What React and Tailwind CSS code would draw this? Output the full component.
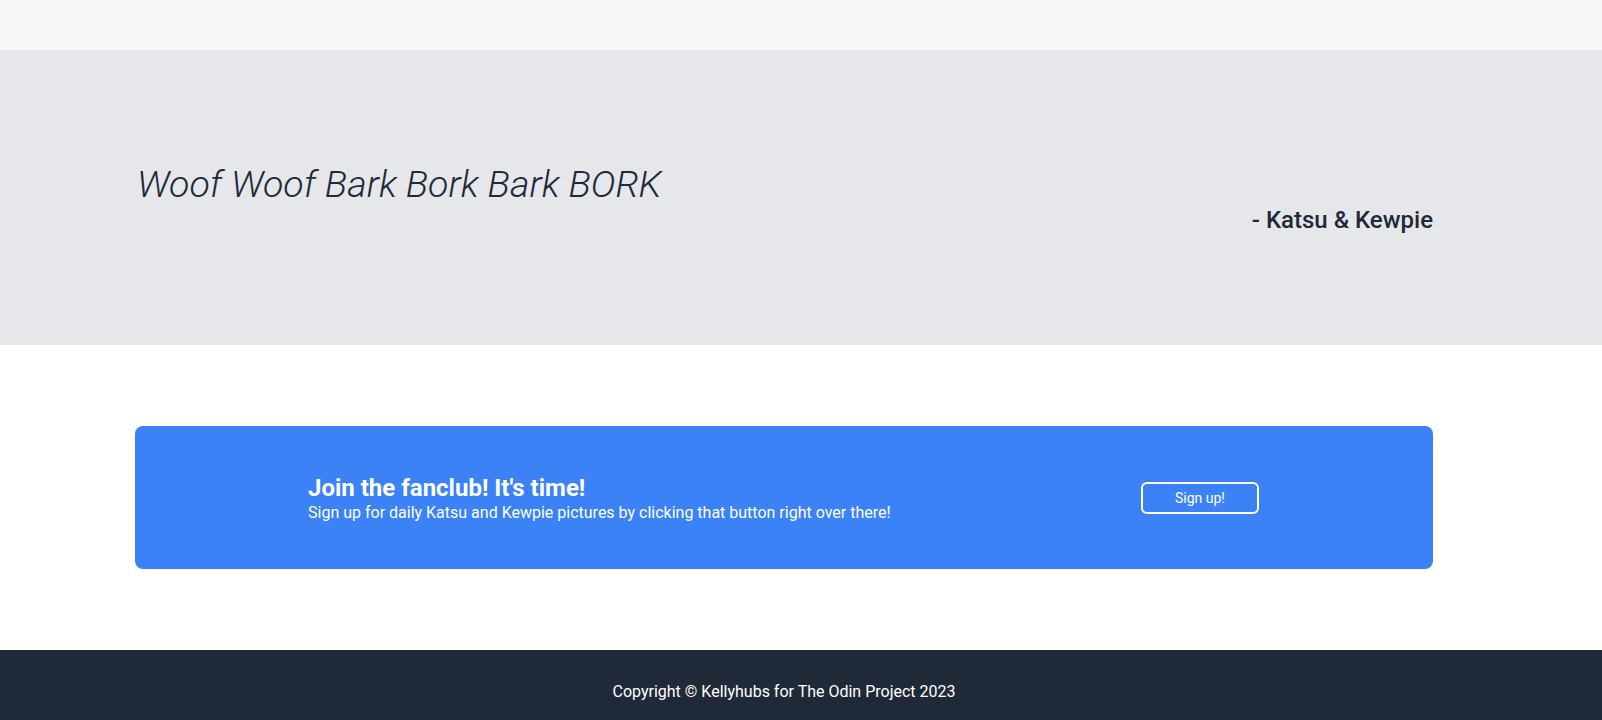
export default function App() {
  return (
    <div className="min-h-screen bg-white font-['Roboto',sans-serif]">
      {/* Top strip */}
      <div className="h-[50px] bg-[#f8f8f6]"></div>

      {/* Quote */}
      <section className="bg-[#e5e7eb]">
        <div className="w-[1568px] px-[135px] pt-[114px] pb-[109px] text-[#1f2937]">
          <p className="pl-[2px] text-[37.5px] leading-[40px] font-light italic">Woof Woof Bark Bork Bark BORK</p>
          <p className="text-right text-2xl font-medium">- Katsu &amp; Kewpie</p>
        </div>
      </section>

      {/* Call to action */}
      <section className="w-[1568px] px-[135px] py-[81px]">
        <div className="h-[143px] flex items-center justify-between rounded-lg bg-[#3b82f6] pl-[173px] pr-[174px] text-white">
          <div className="mt-[5px]">
            <h2 className="text-2xl leading-[26px] font-bold">Join the fanclub! It's time!</h2>
            <p className="text-base">
              Sign up for daily Katsu and Kewpie pictures by clicking that button right over there!
            </p>
          </div>
          <button className="w-[118px] h-[32px] rounded-md border-2 border-white text-sm">
            Sign up!
          </button>
        </div>
      </section>

      {/* Footer */}
      <footer className="bg-[#1f2937] py-[30px]">
        <p className="w-[1568px] text-center text-base text-white">
          Copyright © Kellyhubs for The Odin Project 2023
        </p>
      </footer>
    </div>
  );
}
